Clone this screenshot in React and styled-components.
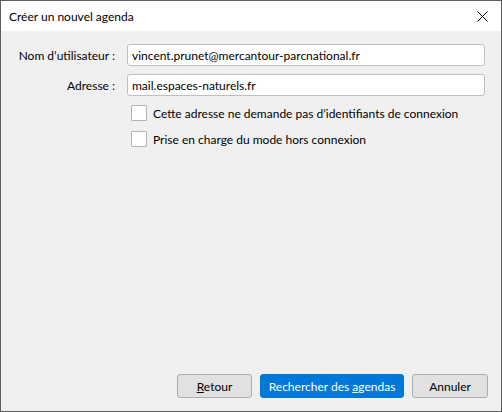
import React from 'react';
import styled, { createGlobalStyle } from 'styled-components';

const GlobalStyle = createGlobalStyle`
  html, body {
    margin: 0;
    padding: 0;
    background: #f0f0f0;
  }
  body {
    font-family: Lato, "Noto Sans", "Liberation Sans", sans-serif;
    font-size: 12px;
    color: #000;
  }
  * { box-sizing: border-box; }
`;

const Window = styled.div`
  width: 502px;
  height: 412px;
  display: flex;
  flex-direction: column;
  border: 1px solid #5f5f5f;
  background: #f0f0f0;
`;

const TitleBar = styled.div`
  height: 30px;
  flex: none;
  display: flex;
  align-items: center;
  justify-content: space-between;
  padding: 0 9px 0 8px;
  background: #fff;
`;

const Title = styled.span`
  font-size: 12px;
`;

const CloseButton = styled.button`
  width: 12px;
  height: 12px;
  padding: 0;
  margin-right: 4px;
  border: none;
  background: transparent;
  display: flex;
  align-items: center;
  justify-content: center;
`;

const Body = styled.div`
  flex: 1;
  display: flex;
  flex-direction: column;
  padding: 13px 13px 13px 9px;
`;

const Form = styled.div`
  display: grid;
  grid-template-columns: 105px 1fr;
  column-gap: 12px;
  row-gap: 8px;
  padding-right: 3px;
`;

const Label = styled.label`
  justify-self: end;
  align-self: center;
`;

const Field = styled.input`
  height: 22px;
  width: 100%;
  padding: 0 4px;
  border: 1px solid #bfbfbf;
  border-radius: 3px;
  background: #fff;
  font: inherit;
  color: #000;
  outline: none;
`;

const Options = styled.div`
  grid-column: 2;
  display: flex;
  flex-direction: column;
  padding-left: 4px;
  margin-top: -4px;
`;

const Option = styled.label`
  height: 26px;
  display: flex;
  align-items: center;
  gap: 6px;
`;

const Box = styled.span`
  width: 16px;
  height: 16px;
  flex: none;
  border: 1px solid #b4b4b4;
  border-radius: 1px;
  background: #fff;
`;

const Footer = styled.div`
  margin-top: auto;
  display: flex;
  justify-content: flex-end;
  gap: 8px;
`;

const Button = styled.button`
  height: 24px;
  width: ${(p) => p.w}px;
  padding: 0;
  border: 1px solid ${(p) => (p.primary ? '#0078d7' : '#adadad')};
  border-radius: 3px;
  background: ${(p) => (p.primary ? '#0078d7' : '#e1e1e1')};
  color: ${(p) => (p.primary ? '#fff' : '#000')};
  font: inherit;
`;

export default function App() {
  return (
    <>
      <GlobalStyle />
      <Window>
        <TitleBar>
          <Title>Créer un nouvel agenda</Title>
          <CloseButton aria-label="Fermer">
            <svg width="11" height="11" viewBox="0 0 11 11">
              <path d="M0.5 0.5 L10.5 10.5 M10.5 0.5 L0.5 10.5" stroke="#000" strokeWidth="1" />
            </svg>
          </CloseButton>
        </TitleBar>
        <Body>
          <Form>
            <Label>Nom d’utilisateur :</Label>
            <Field defaultValue="vincent.prunet@mercantour-parcnational.fr" />
            <Label>Adresse :</Label>
            <Field defaultValue="mail.espaces-naturels.fr" />
            <Options>
              <Option>
                <Box />
                Cette adresse ne demande pas d’identifiants de connexion
              </Option>
              <Option>
                <Box />
                Prise en charge du mode hors connexion
              </Option>
            </Options>
          </Form>
          <Footer>
            <Button w={75}><u>R</u>etour</Button>
            <Button w={144} primary>Rechercher des <u>a</u>gendas</Button>
            <Button w={76}>Annuler</Button>
          </Footer>
        </Body>
      </Window>
    </>
  );
}
